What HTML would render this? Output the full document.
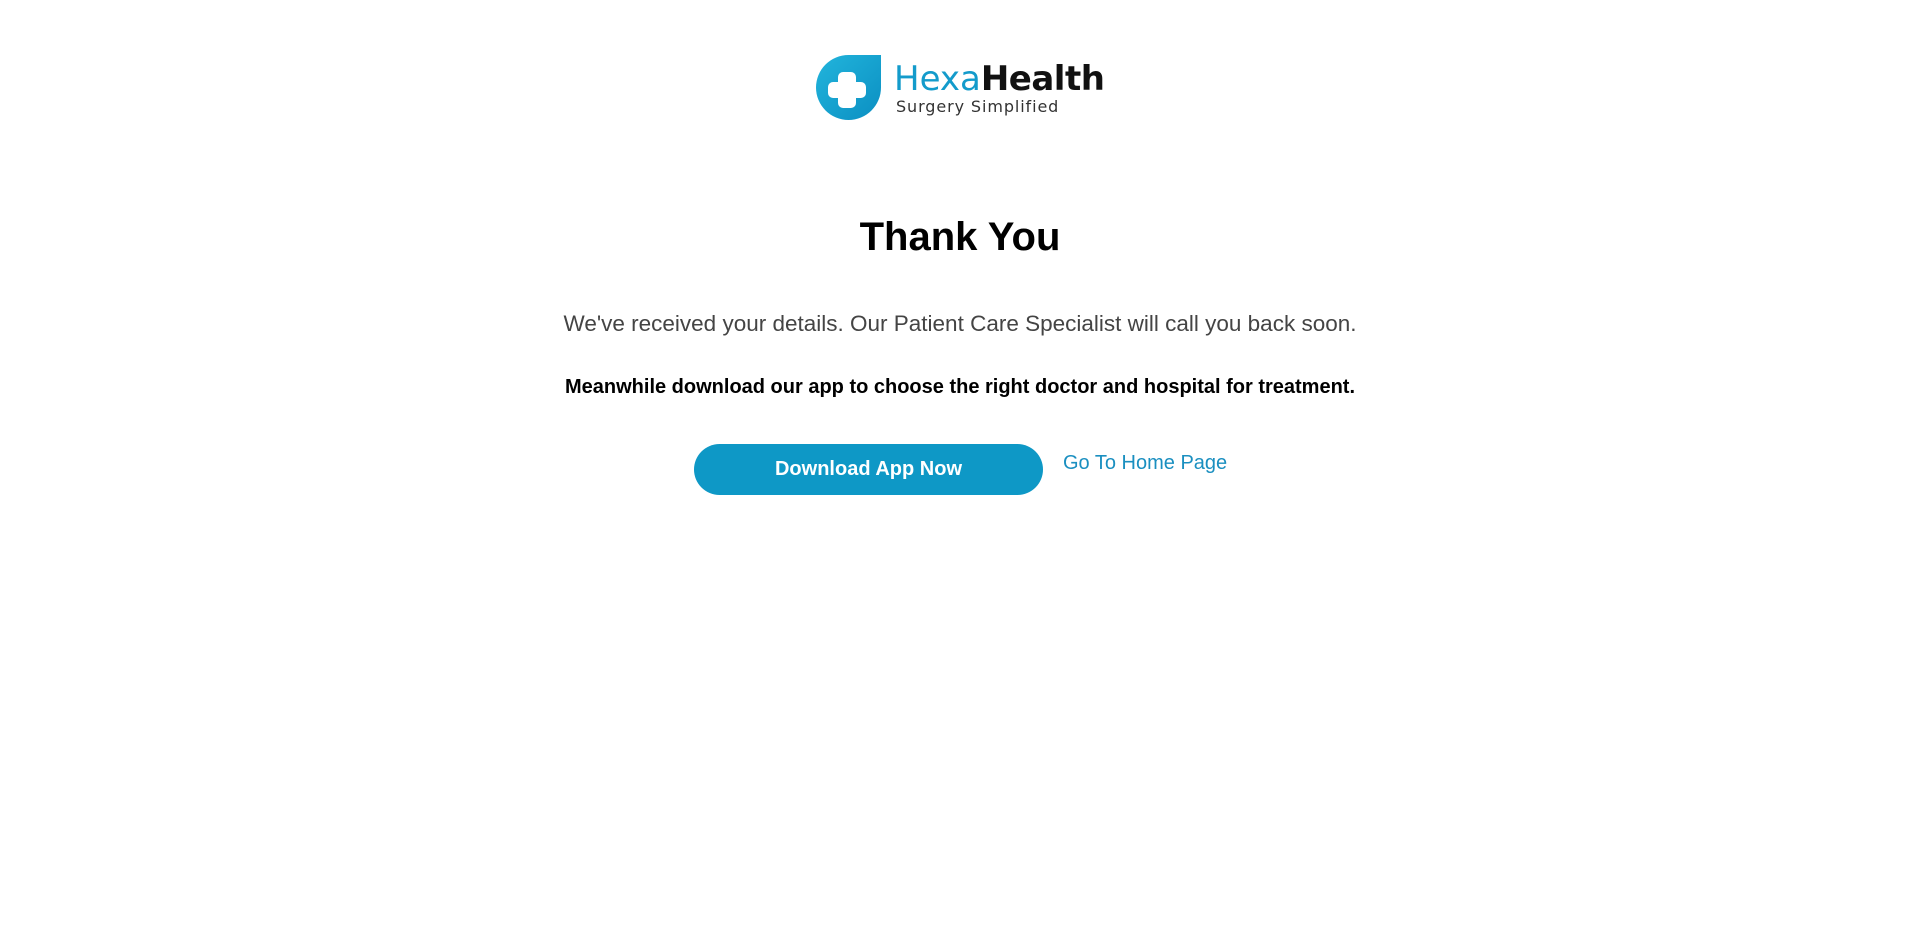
<!DOCTYPE html>
<html><head><meta charset="utf-8"><style>
body{margin:0;background:#fff;width:1920px;height:934px;position:relative;font-family:"Liberation Sans",Arial,sans-serif;overflow:hidden}
.abs{position:absolute}
</style></head><body>
<svg class="abs" style="left:816px;top:55px" width="65" height="65" viewBox="0 0 65 65">
<defs><linearGradient id="g" x1="0" y1="0" x2="1" y2="1"><stop offset="0" stop-color="#22b5dc"/><stop offset="1" stop-color="#0b8fc2"/></linearGradient></defs>
<path d="M32.5 0H65V32.5A32.5 32.5 0 1 1 32.5 0Z" fill="url(#g)"/>
<path d="M27 17h8a5 5 0 0 1 5 5v5h5a5 5 0 0 1 5 5v6a5 5 0 0 1-5 5h-5v5a5 5 0 0 1-5 5h-8a5 5 0 0 1-5-5v-5h-5a5 5 0 0 1-5-5v-6a5 5 0 0 1 5-5h5v-5a5 5 0 0 1 5-5Z" fill="#fff"/>
</svg>
<div class="abs" style="left:894px;top:59px;font-size:34px;line-height:40px;font-family:'DejaVu Sans','Liberation Sans',sans-serif;white-space:nowrap"><span style="color:#139bcb">Hexa</span><span style="color:#111;font-weight:bold;letter-spacing:-0.5px">Health</span></div>
<div class="abs" style="left:896px;top:97px;font-size:16px;line-height:20px;color:#333;letter-spacing:0.9px;font-family:'DejaVu Sans','Liberation Sans',sans-serif">Surgery Simplified</div>
<div class="abs" style="left:0;width:1920px;top:212px;text-align:center;font-size:40px;font-weight:bold;line-height:50px;color:#000">Thank You</div>
<div class="abs" style="left:0;width:1920px;top:311px;text-align:center;font-size:22.5px;line-height:26px;color:#444">We've received your details. Our Patient Care Specialist will call you back soon.</div>
<div class="abs" style="left:0;width:1920px;top:375px;text-align:center;font-size:20px;font-weight:bold;line-height:24px;color:#000">Meanwhile download our app to choose the right doctor and hospital for treatment.</div>
<div class="abs" style="left:694px;top:444px;width:349px;height:51px;border-radius:26px;background:#0e98c6;color:#fff;font-weight:bold;font-size:20px;line-height:51px;text-align:center">Download App Now</div>
<div class="abs" style="left:1063px;top:451px;font-size:20px;line-height:24px;color:#1a8fc0">Go To Home Page</div>
</body></html>
